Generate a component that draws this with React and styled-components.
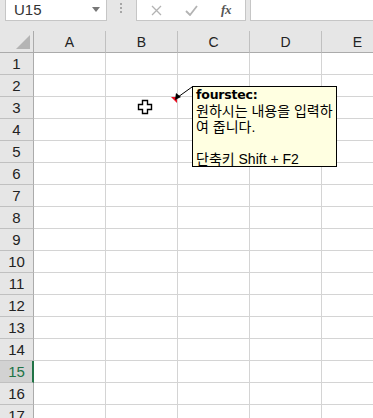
import React from 'react';
import styled, { createGlobalStyle } from 'styled-components';

const GlobalStyle = createGlobalStyle`
  html, body {
    margin: 0;
    padding: 0;
    background: #ffffff;
  }
  body {
    font-family: "Liberation Sans", Arial, sans-serif;
  }
`;

const Page = styled.div`
  position: relative;
  width: 373px;
  height: 418px;
  overflow: hidden;
  background: #ffffff;
`;

const TopBar = styled.div`
  display: flex;
  align-items: flex-start;
  height: 31px;
  background: #e6e6e6;
`;

const NameBox = styled.div`
  display: flex;
  align-items: center;
  justify-content: space-between;
  box-sizing: border-box;
  margin-left: 5px;
  width: 102px;
  height: 21px;
  padding: 0 6px 1px 8px;
  background: #ffffff;
  border: 1px solid #c6c6c6;
  border-top: none;
  font-size: 15px;
  color: #333333;
`;

const DropArrow = styled.span`
  width: 0;
  height: 0;
  border-left: 4px solid transparent;
  border-right: 4px solid transparent;
  border-top: 5px solid #777777;
`;

const Grip = styled.div`
  display: flex;
  flex-direction: column;
  gap: 2px;
  margin: 3px 0 0 13px;
  & span {
    width: 2px;
    height: 2px;
    background: #a6a6a6;
  }
`;

const ToolBox = styled.div`
  display: flex;
  align-items: center;
  box-sizing: border-box;
  margin-left: 14px;
  width: 110px;
  height: 21px;
  background: #ffffff;
  border: 1px solid #c6c6c6;
  border-top: none;
`;

const ToolIcon = styled.div`
  display: flex;
  align-items: center;
  justify-content: center;
  width: ${p => p.w}px;
  height: 19px;
  color: ${p => p.color};
`;

const FxText = styled.span`
  font-family: "Liberation Serif", "Times New Roman", serif;
  font-style: italic;
  font-weight: bold;
  font-size: 13px;
  color: #555555;
  letter-spacing: -0.5px;
`;

const FormulaInput = styled.div`
  box-sizing: border-box;
  margin-left: 4px;
  flex: 1;
  height: 21px;
  background: #ffffff;
  border-left: 1px solid #c6c6c6;
  border-bottom: 1px solid #c6c6c6;
`;

const Sheet = styled.div`
  display: grid;
  grid-template-columns: 34px repeat(5, 72px);
  grid-auto-rows: 22px;
`;

const Corner = styled.div`
  position: relative;
  box-sizing: border-box;
  background: #e6e6e6;
  border-right: 1px solid #ababab;
  border-bottom: 1px solid #ababab;
`;

const ColHead = styled.div`
  display: flex;
  align-items: center;
  justify-content: center;
  box-sizing: border-box;
  background: #e6e6e6;
  border-right: 1px solid #c0c0c0;
  border-bottom: 1px solid #ababab;
  font-size: 14px;
  color: #222222;
  padding-top: 1px;
`;

const RowHead = styled.div`
  display: flex;
  align-items: center;
  justify-content: center;
  box-sizing: border-box;
  background: ${p => (p.active ? '#d2d2d2' : '#e6e6e6')};
  border-right: ${p => (p.active ? '2px solid #217346' : '1px solid #ababab')};
  border-bottom: 1px solid #c0c0c0;
  font-size: 15px;
  color: ${p => (p.active ? '#217346' : '#222222')};
  padding-left: ${p => (p.active ? '1px' : '0')};
`;

const Cell = styled.div`
  box-sizing: border-box;
  border-right: 1px solid #d4d4d4;
  border-bottom: 1px solid #d4d4d4;
`;

const Overlay = styled.svg`
  position: absolute;
  left: 0;
  top: 0;
  pointer-events: none;
`;

const Comment = styled.div`
  position: absolute;
  left: 192px;
  top: 86px;
  box-sizing: border-box;
  width: 145px;
  height: 81px;
  padding: 0 3px;
  background: #ffffe1;
  border: 1px solid #000000;
  color: #000000;
  white-space: nowrap;
  overflow: hidden;
`;

const Author = styled.div`
  height: 16px;
  font-weight: bold;
  font-family: "DejaVu Sans", "Noto Sans CJK KR", sans-serif;
  font-size: 12.5px;
  line-height: 16px;
  letter-spacing: -0.2px;
`;

const Line = styled.div`
  height: 16px;
  font-family: "Liberation Sans", "Noto Sans CJK KR", sans-serif;
  font-size: 14px;
  line-height: 16px;
`;

const columns = ['A', 'B', 'C', 'D', 'E'];
const rows = Array.from({ length: 17 }, (_, i) => i + 1);

function App() {
  return (
    <Page>
      <GlobalStyle />
      <TopBar>
        <NameBox>
          <span>U15</span>
          <DropArrow />
        </NameBox>
        <Grip>
          <span />
          <span />
          <span />
        </Grip>
        <ToolBox>
          <ToolIcon w={38} color="#b3b3b3">
            <svg width="11" height="11" viewBox="0 0 11 11">
              <path d="M1 1 L10 10 M10 1 L1 10" stroke="currentColor" strokeWidth="1.3" />
            </svg>
          </ToolIcon>
          <ToolIcon w={32} color="#b3b3b3">
            <svg width="13" height="11" viewBox="0 0 13 11">
              <path d="M1 6 L5 10 L12 1" stroke="currentColor" strokeWidth="1.8" fill="none" />
            </svg>
          </ToolIcon>
          <ToolIcon w={38} color="#555555">
            <FxText>fx</FxText>
          </ToolIcon>
        </ToolBox>
        <FormulaInput />
      </TopBar>

      <Sheet>
        <Corner>
          <svg width="33" height="21" style={{ position: 'absolute', left: 0, top: 0 }}>
            <polygon points="30,4 30,18 16,18" fill="#b4b4b4" />
          </svg>
        </Corner>
        {columns.map(c => (
          <ColHead key={c}>{c}</ColHead>
        ))}
        {rows.map(r => (
          <React.Fragment key={r}>
            <RowHead active={r === 15}>{r}</RowHead>
            {columns.map(c => (
              <Cell key={c} />
            ))}
          </React.Fragment>
        ))}
      </Sheet>

      <Overlay width="373" height="418">
        {/* comment marker */}
        <polygon points="171,97 177,97 177,103" fill="#e81123" />
        {/* connector arrow */}
        <line x1="192" y1="87" x2="178" y2="97" stroke="#000" strokeWidth="1" />
        <polygon points="175,100 176,93 181,97" fill="#000" />
        {/* cross cursor */}
        <path
          d="M142.5 100.5 h5 v4 h4 v5 h-4 v4 h-5 v-4 h-4 v-5 h4 z"
          fill="#ffffff"
          stroke="#000000"
          strokeWidth="1.4"
        />
      </Overlay>

      <Comment>
        <Author>fourstec:</Author>
        <Line>원하시는 내용을 입력하</Line>
        <Line>여 줍니다.</Line>
        <Line />
        <Line>단축키 Shift + F2</Line>
      </Comment>
    </Page>
  );
}

export default App;
